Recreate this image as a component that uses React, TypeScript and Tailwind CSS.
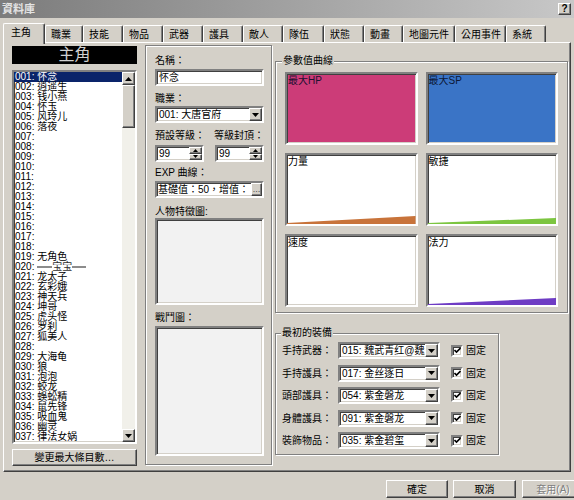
import React from "react";

const FONT = "font-['Liberation_Sans','Noto_Sans_CJK_TC',sans-serif]";
const RAISED =
  "border border-t-white border-l-white border-r-[#404040] border-b-[#404040] shadow-[inset_-1px_-1px_0_#808080] bg-[#d4d0c8]";
const SUNKEN =
  "border-2 border-t-[#808080] border-l-[#808080] border-r-white border-b-white shadow-[inset_1px_1px_0_#404040,inset_-1px_-1px_0_#d4d0c8]";
const ETCHED = "border border-[#808080] shadow-[inset_1px_1px_0_#ffffff,1px_1px_0_#ffffff]";

const TABS: [string, string][] = [
  ["主角", "w-[42px] pl-[7px]"],
  ["職業", "w-[38px] pl-[5px]"],
  ["技能", "w-[40px] pl-[5px]"],
  ["物品", "w-[40px] pl-[5px]"],
  ["武器", "w-[40px] pl-[5px]"],
  ["護具", "w-[40px] pl-[5px]"],
  ["敵人", "w-[40px] pl-[5px]"],
  ["隊伍", "w-[41px] pl-[5px]"],
  ["狀態", "w-[40px] pl-[5px]"],
  ["動畫", "w-[39px] pl-[5px]"],
  ["地圖元件", "w-[52px] pl-[5px]"],
  ["公用事件", "w-[51px] pl-[5px]"],
  ["系統", "w-[40px] pl-[5px]"],
];

// 37 visible rows, blank names are empty slots
const ACTORS = [
  "怀念", "逍遥生", "钱小燕", "怀玉", "风玲儿", "落夜", "", "", "", "", "", "", "", "", "", "", "", "",
  "无角色", "*", "龙太子", "玄彩娥", "神天兵", "坤哥", "虎头怪", "罗刹", "狐美人", "", "大海龟", "狼",
  "泡泡", "蛟龙", "蜈蚣精", "鼠先锋", "吸血鬼", "幽灵", "律法女娲",
];

const EQUIP = [
  ["手持武器：", "015: 魏武青红@魏武将"],
  ["手持護具：", "017: 金丝逐日"],
  ["頭部護具：", "054: 紫金磐龙"],
  ["身體護具：", "091: 紫金磐龙"],
  ["裝飾物品：", "035: 紫金碧玺"],
];

function Arrow({ up = false }: { up?: boolean }) {
  return (
    <svg width="7" height="4" viewBox="0 0 7 4">
      <polygon points={up ? "0,4 7,4 3.5,0" : "0,0 7,0 3.5,4"} fill="#000" />
    </svg>
  );
}

function DropButton() {
  return (
    <div className={`${RAISED} w-[13px] h-full flex items-center justify-center shrink-0`}>
      <Arrow />
    </div>
  );
}

function Select({ value, className = "" }: { value: string; className?: string }) {
  return (
    <div className={`${SUNKEN} bg-white h-[17px] flex ${className}`}>
      <span className="flex-1 overflow-hidden whitespace-nowrap pl-[2px] leading-[13px]">{value}</span>
      <DropButton />
    </div>
  );
}

function Spin({ value }: { value: string }) {
  return (
    <div className={`${SUNKEN} bg-white h-[17px] w-[49px] flex`}>
      <span className="flex-1 pl-[2px] leading-[13px]">{value}</span>
      <div className="w-[13px] flex flex-col">
        <div className={`${RAISED} flex-1 flex items-center justify-center`}>
          <svg width="5" height="3" viewBox="0 0 5 3">
            <polygon points="0,3 5,3 2.5,0" fill="#000" />
          </svg>
        </div>
        <div className={`${RAISED} flex-1 flex items-center justify-center`}>
          <svg width="5" height="3" viewBox="0 0 5 3">
            <polygon points="0,0 5,0 2.5,3" fill="#000" />
          </svg>
        </div>
      </div>
    </div>
  );
}

function Checkbox() {
  return (
    <div className={`${SUNKEN} bg-white w-[12px] h-[12px] flex items-center justify-center shrink-0`}>
      <svg width="7" height="7" viewBox="0 0 7 7">
        <path d="M0.5 3 L2.5 5 L6.5 1" stroke="#000" strokeWidth="1.6" fill="none" />
      </svg>
    </div>
  );
}

function Curve({
  label,
  bg,
  text = "text-black",
  fill,
  rise = 0,
}: {
  label: string;
  bg: string;
  text?: string;
  fill?: string;
  rise?: number;
}) {
  return (
    <div className={`${SUNKEN} ${bg} h-[73px] flex flex-col`}>
      <div className={`pl-[1px] pt-[1px] leading-[12px] ${text}`}>{label}</div>
      {fill && (
        <svg className="mt-auto w-full h-[10px] block" viewBox="0 0 100 10" preserveAspectRatio="none">
          <polygon points={`0,10 0,${10 - 1} 100,${10 - rise} 100,10`} fill={fill} />
        </svg>
      )}
    </div>
  );
}

function ActorRow({ index, name }: { index: number; name: string }) {
  const num = String(index + 1).padStart(3, "0");
  const selected = index === 0;
  return (
    <div
      className={`h-[10px] leading-[10px] whitespace-nowrap pl-[1px] ${
        selected ? "bg-[#0a246a] text-white" : "text-black"
      }`}
    >
      {num}:{" "}
      {name === "*" ? (
        <span className="text-[#303030]">
          <span className="inline-block w-[15px] h-[2px] bg-[#8c8c8c] align-middle" />
          宝宝
          <span className="inline-block w-[14px] h-[2px] bg-[#8c8c8c] align-middle" />
        </span>
      ) : (
        name
      )}
    </div>
  );
}

export default function App() {
  return (
    <div className={`${FONT} w-[574px] h-[500px] overflow-hidden bg-[#d4d0c8] text-[10px] text-black flex flex-col`}>
      {/* title bar */}
      <div className="h-[18px] bg-linear-to-r from-[#7c7c7c] to-[#c8c8c8] flex items-center justify-between">
        <span className="pl-[2px] font-bold text-[11px] text-[#e4e4e4]">資料庫</span>
        <div className={`${RAISED} w-[13px] h-[12px] mr-[3px] flex items-center justify-center text-[10px] font-bold leading-none`}>
          ?
        </div>
      </div>

      {/* tabs */}
      <div className="h-[24px] flex items-end pl-[3px]">
        {TABS.map(([name, cls], i) => (
          <div
            key={name}
            className={`${cls} shrink-0 border-t border-l border-t-white border-l-white border-r border-r-[#404040] shadow-[inset_-1px_0_0_#808080] rounded-t-[2px] bg-[#d4d0c8] flex items-center ${
              i === 0 ? "h-[21px] -mb-[2px] relative z-10 pb-[3px]" : "h-[17px]"
            }`}
          >
            {name}
          </div>
        ))}
      </div>

      {/* tab page */}
      <div className="mx-[3px] h-[430px] border border-t-white border-l-white border-r-[#404040] border-b-[#404040] shadow-[inset_-1px_-1px_0_#808080] flex items-start pt-[2px] pl-[8px]">
        {/* actor list */}
        <div className="w-[125px] flex flex-col">
          <div className="mt-[1px] h-[18px] bg-black text-[#d0d0d0] text-[16px] leading-[18px] text-center">主角</div>
          <div className={`${SUNKEN} bg-white mt-[6px] h-[374px] flex`}>
            <div className="flex-1 overflow-hidden">
              {ACTORS.map((n, i) => (
                <ActorRow key={i} index={i} name={n} />
              ))}
            </div>
            <div className="w-[13px] flex flex-col bg-[#f1f0ea]">
              <div className={`${RAISED} h-[13px] flex items-center justify-center`}>
                <Arrow up />
              </div>
              <div className={`${RAISED} h-[43px]`} />
              <div className="flex-1" />
              <div className={`${RAISED} h-[13px] flex items-center justify-center`}>
                <Arrow />
              </div>
            </div>
          </div>
          <div className={`${RAISED} mt-[5px] h-[17px] flex items-center justify-center`}>變更最大條目數…</div>
        </div>

        {/* basic properties */}
        <div className={`${ETCHED} ml-[8px] w-[127px] h-[420px] pt-[9px] pl-[9px] flex flex-col`}>
          <div className="leading-[12px]">名稱：</div>
          <div className={`${SUNKEN} bg-white mt-[2px] h-[17px] w-[109px] pl-[2px] leading-[13px]`}>怀念</div>
          <div className="mt-[7px] leading-[12px]">職業：</div>
          <Select value="001: 大唐官府" className="mt-[1px] w-[109px]" />
          <div className="mt-[7px] leading-[12px] flex">
            <span className="w-[59px]">預設等級：</span>
            <span>等級封頂：</span>
          </div>
          <div className="mt-[3px] flex gap-[11px]">
            <Spin value="99" />
            <Spin value="99" />
          </div>
          <div className="mt-[5px] leading-[12px]">EXP 曲線：</div>
          <div className={`${SUNKEN} bg-white mt-[2px] h-[17px] w-[109px] flex`}>
            <span className="flex-1 overflow-hidden whitespace-nowrap pl-[1px] leading-[13px]">基礎值：50，增值：</span>
            <div className={`${RAISED} w-[11px] h-full flex items-center justify-center leading-none text-[8px]`}>…</div>
          </div>
          <div className="mt-[8px] leading-[12px]">人物特徵圖:</div>
          <div className={`${SUNKEN} bg-[#f2f2f2] h-[87px] w-[109px]`} />
          <div className="mt-[7px] leading-[12px]">戰鬥圖：</div>
          <div className={`${SUNKEN} bg-[#f2f2f2] mt-[2px] h-[130px] w-[109px]`} />
        </div>

        {/* curves + equipment */}
        <div className="ml-[3px] w-[293px] flex flex-col">
          <fieldset className={`${ETCHED} mt-[10px] pt-[5px] pb-[5px] pl-[9px] pr-[9px]`}>
            <legend className="-ml-[3px] px-[1px] leading-[12px] bg-[#d4d0c8]">參數值曲線</legend>
            <div className="grid grid-cols-2 gap-x-[8px] gap-y-[8px]">
              <Curve label="最大HP" bg="bg-[#cc3c78]" text="text-[#1c1030]" />
              <Curve label="最大SP" bg="bg-[#3a74c6]" text="text-[#0c1838]" />
              <Curve label="力量" bg="bg-white" fill="#c8733a" rise={8} />
              <Curve label="敏捷" bg="bg-white" fill="#7cc540" rise={6} />
              <Curve label="速度" bg="bg-white" />
              <Curve label="法力" bg="bg-white" fill="#6e3cc4" rise={7} />
            </div>
          </fieldset>

          <fieldset className={`${ETCHED} mt-[14px] w-[224px] pt-[3px] pb-[5px] pl-[6px]`}>
            <legend className="-ml-[1px] px-[1px] leading-[12px] bg-[#d4d0c8]">最初的裝備</legend>
            <div className="flex flex-col gap-[5.5px]">
              {EQUIP.map(([label, value]) => (
                <div key={label} className="h-[17px] flex items-center">
                  <span className="w-[56px] shrink-0">{label}</span>
                  <Select value={value} className="w-[102px] shrink-0" />
                  <div className="ml-[11px]">
                    <Checkbox />
                  </div>
                  <span className="ml-[3px]">固定</span>
                </div>
              ))}
            </div>
          </fieldset>
        </div>
      </div>

      {/* dialog buttons */}
      <div className="mt-[8px] h-[18px] flex justify-end -mr-[10px]">
        <div className={`${RAISED} w-[62px] flex items-center justify-center`}>確定</div>
        <div className={`${RAISED} ml-[5px] w-[63px] flex items-center justify-center`}>取消</div>
        <div className={`${RAISED} ml-[6px] w-[62px] flex items-center justify-center text-[#808080] [text-shadow:1px_1px_0_#ffffff]`}>
          套用(A)
        </div>
      </div>
    </div>
  );
}
